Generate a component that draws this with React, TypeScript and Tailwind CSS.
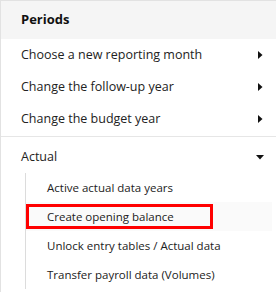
import React from "react";

const RightArrow = () => (
  <svg width="5" height="8" viewBox="0 0 5 8" className="shrink-0">
    <path d="M0 0 L4.5 4 L0 8 Z" fill="#111" />
  </svg>
);

const DownArrow = () => (
  <svg width="8" height="5" viewBox="0 0 8 5" className="shrink-0">
    <path d="M0 0 L8 0 L4 4.5 Z" fill="#111" />
  </svg>
);

export default function App() {
  const font = { fontFamily: '"Open Sans", "Noto Sans", sans-serif' };
  return (
    <div
      className="w-[276px] h-[292px] bg-white border-l border-t border-[#e2e2e2] overflow-hidden text-[#222]"
      style={font}
    >
      <div className="h-[38px] bg-[#f5f5f5] flex items-center pl-[20px] text-[13px] font-bold text-[#111]">
        Periods
      </div>
      <div className="flex flex-col">
        {[
          "Choose a new reporting month",
          "Change the follow-up year",
          "Change the budget year",
        ].map((t) => (
          <div
            key={t}
            className="h-[32px] flex items-center justify-between pl-[20px] pr-[13px] text-[12.5px]"
          >
            <span>{t}</span>
            <RightArrow />
          </div>
        ))}
      </div>
      <div className="mt-[1px] border-t border-[#e6e6e6]" />
      <div className="h-[36px] pt-[4px] flex items-center justify-between pl-[20px] pr-[12px] text-[12.5px]">
        <span>Actual</span>
        <DownArrow />
      </div>
      <div className="ml-[24px] border-l border-[#dcdcdc] flex flex-col text-[11.5px]">
        <div className="h-[29px] flex items-center pl-[21px]">Active actual data years</div>
        <div className="h-[29px] flex items-center bg-[#fafafa] mr-[4px]">
          <div className="h-[25px] w-[187px] border-[3px] border-[#ff0000] flex items-center pl-[18px]">
            Create opening balance
          </div>
        </div>
        <div className="h-[29px] flex items-center pl-[21px]">Unlock entry tables / Actual data</div>
        <div className="h-[29px] flex items-center pl-[21px]">Transfer payroll data (Volumes)</div>
      </div>
    </div>
  );
}
